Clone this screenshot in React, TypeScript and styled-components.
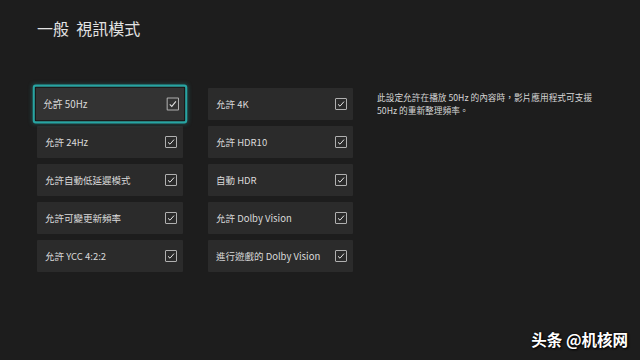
import React from 'react';
import styled, { createGlobalStyle } from 'styled-components';

const GlobalStyle = createGlobalStyle`
  html, body {
    margin: 0;
    padding: 0;
    background: #1d1d1d;
  }
  body {
    width: 640px;
    height: 360px;
    overflow: hidden;
    font-family: "Noto Sans CJK TC", "Noto Sans", sans-serif;
  }
`;

const options = [
  { label: '允許 50Hz', checked: true },
  { label: '允許 24Hz', checked: true },
  { label: '允許自動低延遲模式', checked: true },
  { label: '允許可變更新頻率', checked: true },
  { label: '允許 YCC 4:2:2', checked: true },
  { label: '允許 4K', checked: true },
  { label: '允許 HDR10', checked: true },
  { label: '自動 HDR', checked: true },
  { label: '允許 Dolby Vision', checked: true },
  { label: '進行遊戲的 Dolby Vision', checked: true },
];

function App() {
  const focused = 0;

  return (
    <Page>
      <GlobalStyle />
      <Title>一般&nbsp;&nbsp;視訊模式</Title>
      <Content>
        <OptionGrid>
          {options.map((opt, i) => (
            <OptionCard key={opt.label} focused={i === focused}>
              <OptionLabel>{opt.label}</OptionLabel>
              <CheckBox>
                {opt.checked && (
                  <svg width="8" height="8" viewBox="0 0 8 8">
                    <path d="M1 4.3 L3 6.2 L7 1.6" fill="none" stroke="#e4e4e4" strokeWidth="1" />
                  </svg>
                )}
              </CheckBox>
            </OptionCard>
          ))}
        </OptionGrid>
        <Description>
          此設定允許在播放 50Hz 的內容時，影片應用程式可支援
          <br />
          50Hz 的重新整理頻率。
        </Description>
      </Content>
      <Watermark>头条 @机核网</Watermark>
    </Page>
  );
}

const Page = styled.div`
  position: relative;
  width: 640px;
  height: 360px;
  box-sizing: border-box;
  padding: 18px 0 0 37px;
  color: #dcdcdc;
`;

const Title = styled.h1`
  margin: 0;
  font-size: 16px;
  font-weight: 400;
  line-height: 20px;
  color: #e2e2e2;
`;

const Content = styled.div`
  display: flex;
  align-items: flex-start;
  margin-top: 50px;
`;

const OptionGrid = styled.div`
  display: grid;
  grid-template-columns: 146px 145px;
  grid-template-rows: repeat(5, 32px);
  grid-auto-flow: column;
  column-gap: 25px;
  row-gap: 6px;
`;

const OptionCard = styled.div<{ focused?: boolean }>`
  display: flex;
  align-items: center;
  justify-content: space-between;
  padding: 0 6px 0 8px;
  background: ${p => (p.focused ? '#333333' : '#2b2b2b')};
  transform: ${p => (p.focused ? 'scale(1.03, 1.08)' : 'none')};
  box-shadow: ${p =>
    p.focused ? 'inset 0 0 0 1px #161616, 0 0 0 2px #27a4a2, 0 0 4px 2px rgba(39,164,162,0.35)' : 'none'};
  border-radius: 1px;
`;

const OptionLabel = styled.span`
  font-size: 9.5px;
  color: #dadada;
  white-space: nowrap;
`;

const CheckBox = styled.span`
  display: flex;
  align-items: center;
  justify-content: center;
  width: 10px;
  height: 10px;
  border: 1px solid #b0b0b0;
  border-radius: 1px;
`;

const Description = styled.p`
  margin: 3px 0 0 24px;
  font-size: 8.7px;
  line-height: 13px;
  color: #d6d6d6;
  white-space: nowrap;
`;

const Watermark = styled.div`
  position: absolute;
  right: 12px;
  bottom: 10px;
  font-family: "Noto Sans CJK SC", sans-serif;
  font-size: 15.5px;
  font-weight: 700;
  color: #ffffff;
  text-shadow: 0 0 2px #000, 1px 1px 2px #000;
`;

export default App;
